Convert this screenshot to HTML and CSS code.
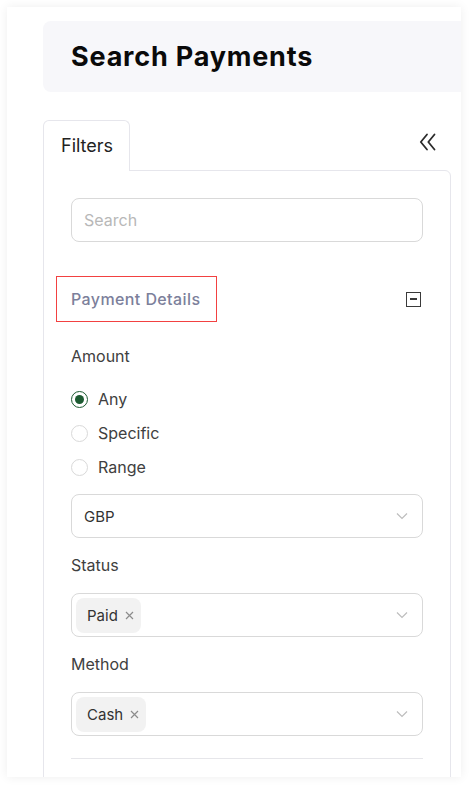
FILE: index.html
```html
<!DOCTYPE html>
<html lang="en">
<head>
<meta charset="utf-8">
<title>Search Payments</title>
<link rel="stylesheet" href="styles.css">
</head>
<body>
<div class="card">
  <div class="page-head">
    <h1 class="title">Search Payments</h1>
  </div>
  <div class="tabs-row">
    <div class="tab">Filters</div>
    <button class="collapse" aria-label="Collapse">
      <svg width="18" height="18" viewBox="0 0 18 18" fill="none" stroke="#2b2b2b" stroke-width="1.8" stroke-linecap="round" stroke-linejoin="round"><path d="M8 1.5 L1.8 9 L8 16.5"/><path d="M15.5 1.5 L9.3 9 L15.5 16.5"/></svg>
    </button>
  </div>
  <div class="panel">
    <div class="search">Search</div>
    <div class="section-head">
      <div class="section-title">Payment Details</div>
      <span class="minus"><span class="minus-bar"></span></span>
    </div>
    <div class="label label-amount">Amount</div>
    <div class="radios">
      <div class="radio-row"><span class="radio checked"></span><span class="radio-text">Any</span></div>
      <div class="radio-row"><span class="radio"></span><span class="radio-text">Specific</span></div>
      <div class="radio-row"><span class="radio"></span><span class="radio-text">Range</span></div>
    </div>
    <div class="select select-currency">
      <span class="value">GBP</span>
      <svg class="chev" width="12" height="8" viewBox="0 0 12 8" fill="none" stroke="#bdbdbd" stroke-width="1.2"><path d="M1 1.5 L6 6.5 L11 1.5"/></svg>
    </div>
    <div class="label">Status</div>
    <div class="select select-tags">
      <span class="tag">Paid <svg class="x" width="9" height="9" viewBox="0 0 9 9" stroke="#8c8c8c" stroke-width="1.2"><path d="M1 1 L8 8 M8 1 L1 8"/></svg></span>
      <svg class="chev" width="12" height="8" viewBox="0 0 12 8" fill="none" stroke="#bdbdbd" stroke-width="1.2"><path d="M1 1.5 L6 6.5 L11 1.5"/></svg>
    </div>
    <div class="label">Method</div>
    <div class="select select-tags">
      <span class="tag">Cash <svg class="x" width="9" height="9" viewBox="0 0 9 9" stroke="#8c8c8c" stroke-width="1.2"><path d="M1 1 L8 8 M8 1 L1 8"/></svg></span>
      <svg class="chev" width="12" height="8" viewBox="0 0 12 8" fill="none" stroke="#bdbdbd" stroke-width="1.2"><path d="M1 1.5 L6 6.5 L11 1.5"/></svg>
    </div>
    <div class="divider"></div>
  </div>
</div>
</body>
</html>
```
FILE: styles.css
```css
* { box-sizing: border-box; }
html, body { margin: 0; padding: 0; background: #ffffff; }
body {
  font-family: Inter, "Open Sans", sans-serif;
  color: #333;
  padding: 7px 0 0 7px;
  height: 785px;
  overflow: hidden;
}
.card {
  width: 454px;
  height: 770px;
  background: #fff;
  box-shadow: 0 0 10px rgba(0, 0, 0, 0.07);
  overflow: hidden;
  padding: 14px 0 0 36px;
}
.page-head {
  height: 71px;
  background: #f7f7fa;
  border-radius: 8px 0 0 8px;
  display: flex;
  align-items: center;
  padding-left: 28px;
}
.title {
  margin: 0;
  font-size: 27px;
  font-weight: 700;
  color: #0a0a0a;
  letter-spacing: 0.8px;
}
.tabs-row {
  margin-top: 28px;
  width: 408px;
  display: flex;
  justify-content: space-between;
  align-items: flex-start;
}
.tab {
  width: 87px;
  height: 51px;
  border: 1px solid #e6e6ec;
  border-bottom: none;
  border-radius: 6px 6px 0 0;
  background: #fff;
  font-size: 18px;
  line-height: 49px;
  padding-left: 17px;
  color: #222;
  position: relative;
  z-index: 1;
  margin-bottom: -1px;
}
.collapse {
  background: none;
  border: 0;
  padding: 0;
  margin: 13px 14px 0 0;
  width: 18px;
  height: 18px;
  display: block;
}
.collapse svg { display: block; }
.panel {
  width: 408px;
  height: 700px;
  border: 1px solid #e6e6ec;
  border-radius: 0 6px 0 0;
  padding: 27px 27px 0 27px;
}
.search {
  height: 44px;
  border: 1px solid #d9d9d9;
  border-radius: 8px;
  padding-left: 12px;
  font-size: 16px;
  line-height: 42px;
  color: #b8b8b8;
}
.section-head {
  margin-top: 34px;
  height: 46px;
  display: flex;
  align-items: center;
  justify-content: space-between;
}
.section-title {
  margin-left: -15px;
  height: 46px;
  width: 161px;
  border: 1px solid #f24141;
  padding-left: 14px;
  font-size: 16px;
  font-weight: 500;
  letter-spacing: 0.4px;
  line-height: 44px;
  color: #7c809b;
}
.minus {
  width: 15px;
  height: 15px;
  border: 1.5px solid #3a3a3a;
  margin-right: 2px;
  display: flex;
  align-items: center;
  justify-content: center;
}
.minus-bar {
  width: 7px;
  height: 1.5px;
  background: #3a3a3a;
}
.label {
  font-size: 16px;
  line-height: 22px;
  color: #404040;
  margin-top: 16px;
}
.label-amount { margin-top: 23px; }
.radios {
  margin-top: 15px;
  display: flex;
  flex-direction: column;
}
.radio-row {
  height: 34px;
  display: flex;
  align-items: center;
}
.radio {
  width: 17px;
  height: 17px;
  border: 1px solid #d9d9d9;
  border-radius: 50%;
  margin-right: 10px;
  display: flex;
  align-items: center;
  justify-content: center;
}
.radio.checked { border-color: #1d5b32; }
.radio.checked::after {
  content: "";
  width: 9px;
  height: 9px;
  border-radius: 50%;
  background: #1d5b32;
}
.radio-text {
  font-size: 16px;
  color: #404040;
}
.select {
  height: 44px;
  border: 1px solid #d9d9d9;
  border-radius: 8px;
  display: flex;
  align-items: center;
  justify-content: space-between;
  padding-right: 14px;
}
.select-currency {
  margin-top: 10px;
  padding-left: 12px;
}
.select-tags {
  margin-top: 17px;
  padding-left: 4px;
}
.value { font-size: 15px; color: #333; }
.tag {
  height: 35px;
  background: #f2f2f2;
  border-radius: 8px;
  padding: 0 7px 0 11px;
  font-size: 15px;
  line-height: 35px;
  color: #333;
  display: flex;
  align-items: center;
  gap: 7px;
}
.x { display: block; }
.chev { display: block; }
.divider {
  margin-top: 22px;
  height: 1px;
  background: #e6e6ea;
}
```
